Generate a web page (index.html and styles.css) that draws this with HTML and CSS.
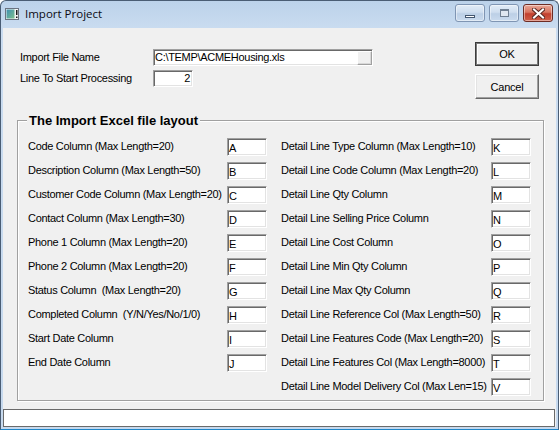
FILE: index.html
```html
<!DOCTYPE html>
<html>
<head>
<meta charset="utf-8">
<title>Import Project</title>
<link rel="stylesheet" href="styles.css">
</head>
<body>
<div class="window">
  <div class="titlebar">
    <svg class="appicon" width="14" height="12" viewBox="0 0 14 12">
      <defs>
        <linearGradient id="ig" x1="0" y1="0" x2="1" y2="1">
          <stop offset="0" stop-color="#3f8fb0"/>
          <stop offset="1" stop-color="#7cc08e"/>
        </linearGradient>
      </defs>
      <rect x="0.5" y="0.5" width="13" height="11" fill="#f4f4f4" stroke="#6b7380"/>
      <rect x="1.5" y="1.5" width="8" height="9" fill="url(#ig)"/>
      <rect x="11" y="2" width="1.5" height="5" fill="#1a1a1a"/>
      <rect x="11" y="8.5" width="1.5" height="1.5" fill="#1a1a1a"/>
    </svg>
    <span class="title">Import Project</span>
    <div class="caption">
      <div class="cbtn"><span class="min-glyph"></span></div>
      <div class="cbtn"><span class="max-glyph"></span></div>
      <div class="cbtn close">
        <svg width="13" height="11" viewBox="0 0 13 11">
          <path d="M2 1.5 L11 9.5 M11 1.5 L2 9.5" stroke="#5a2a24" stroke-width="4" stroke-linecap="square"/>
          <path d="M2 1.5 L11 9.5 M11 1.5 L2 9.5" stroke="#ffffff" stroke-width="2" stroke-linecap="square"/>
        </svg>
      </div>
    </div>
  </div>
  <div class="client">
    <div class="top">
      <div class="form">
        <span class="lbl">Import File Name</span>
        <div class="field file"><span class="val">C:\TEMP\ACMEHousing.xls</span><span class="browse"></span></div>
        <span class="lbl">Line To Start Processing</span>
        <div class="field num"><span class="val">2</span></div>
      </div>
      <div class="buttons">
        <div class="btn default">OK</div>
        <div class="btn">Cancel</div>
      </div>
    </div>
    <div class="group">
      <div class="legend">The Import Excel file layout</div>
      <div class="grid">
        <span class="lbl">Code Column (Max Length=20)</span><div class="cell">A</div>
        <span class="lbl rl">Detail Line Type Column (Max Length=10)</span><div class="cell">K</div>

        <span class="lbl">Description Column (Max Length=50)</span><div class="cell">B</div>
        <span class="lbl rl">Detail Line Code Column (Max Length=20)</span><div class="cell">L</div>

        <span class="lbl">Customer Code Column (Max Length=20)</span><div class="cell">C</div>
        <span class="lbl rl">Detail Line Qty Column</span><div class="cell">M</div>

        <span class="lbl">Contact Column (Max Length=30)</span><div class="cell">D</div>
        <span class="lbl rl">Detail Line Selling Price Column</span><div class="cell">N</div>

        <span class="lbl">Phone 1 Column (Max Length=20)</span><div class="cell">E</div>
        <span class="lbl rl">Detail Line Cost Column</span><div class="cell">O</div>

        <span class="lbl">Phone 2 Column (Max Length=20)</span><div class="cell">F</div>
        <span class="lbl rl">Detail Line Min Qty Column</span><div class="cell">P</div>

        <span class="lbl">Status Column&nbsp; (Max Length=20)</span><div class="cell">G</div>
        <span class="lbl rl">Detail Line Max Qty Column</span><div class="cell">Q</div>

        <span class="lbl">Completed Column&nbsp; (Y/N/Yes/No/1/0)</span><div class="cell">H</div>
        <span class="lbl rl">Detail Line Reference Col (Max Length=50)</span><div class="cell">R</div>

        <span class="lbl">Start Date Column</span><div class="cell">I</div>
        <span class="lbl rl">Detail Line Features Code (Max Length=20)</span><div class="cell">S</div>

        <span class="lbl">End Date Column</span><div class="cell">J</div>
        <span class="lbl rl">Detail Line Features Col (Max Length=8000)</span><div class="cell">T</div>

        <span class="lbl"></span><span></span>
        <span class="lbl rl">Detail Line Model Delivery Col (Max Len=15)</span><div class="cell">V</div>
      </div>
    </div>
    <div class="status"></div>
  </div>
</div>
</body>
</html>
```
FILE: styles.css
```css
html, body {
  margin: 0;
  padding: 0;
  background: #ffffff;
}
body {
  width: 559px;
  height: 430px;
  overflow: hidden;
  font-family: "Liberation Sans", Arial, sans-serif;
  font-size: 11px;
  color: #000;
}
.window {
  width: 559px;
  height: 430px;
  box-sizing: border-box;
  border: 1px solid #4a5d74;
  border-bottom-color: #1f86c8;
  border-radius: 6px 6px 0 0;
  padding: 0 2px 2px 2px;
  background: linear-gradient(#bcd2ea, #cadcf0 28px, #c6d9ee);
  display: flex;
  flex-direction: column;
}
.titlebar {
  height: 27px;
  box-sizing: border-box;
  padding-top: 3px;
  display: flex;
  align-items: flex-start;
}
.appicon {
  margin: 4px 0 0 2px;
  flex: none;
}
.title {
  font-family: "Open Sans", "Noto Sans", sans-serif;
  font-size: 11.5px;
  line-height: 16px;
  margin: 2px 0 0 6px;
  color: #0b0b14;
}
.caption {
  margin-left: auto;
  margin-right: 3px;
  display: flex;
  gap: 4px;
}
.cbtn {
  width: 30px;
  height: 18px;
  box-sizing: border-box;
  border: 1px solid #7f95b3;
  border-radius: 3px;
  background: linear-gradient(#e2ecf7, #cfdeef 45%, #bccfe6 55%, #cadbee);
  box-shadow: inset 0 0 0 1px rgba(255,255,255,0.45);
  display: flex;
  align-items: center;
  justify-content: center;
}
.min-glyph {
  width: 10px;
  height: 3px;
  box-sizing: border-box;
  background: #fff;
  border: 1px solid #43566f;
  margin-top: 7px;
}
.max-glyph {
  width: 9px;
  height: 8px;
  box-sizing: border-box;
  border: 1px solid #6f7f92;
  border-top-width: 2px;
  background: #dfe7f1;
}
.cbtn.close {
  border-color: #6d2c24;
  background: linear-gradient(#e9a797, #d8745f 45%, #c23f2e 55%, #cf5f48);
}
.client {
  flex: 1;
  background: #f0f0f0;
  display: flex;
  flex-direction: column;
}
.top {
  display: flex;
  padding: 14px 17px 0 17px;
}
.form {
  padding-top: 7px;
  display: grid;
  grid-template-columns: 133px auto;
  grid-auto-rows: 17px;
  row-gap: 4px;
  align-self: flex-start;
}
.lbl {
  letter-spacing: -0.3px;
  white-space: nowrap;
  line-height: 17px;
}
.field {
  height: 17px;
  box-sizing: border-box;
  border: 1px solid;
  border-color: #a0a0a0 #ffffff #ffffff #a0a0a0;
  box-shadow: inset 1px 1px 0 #696969, inset -1px -1px 0 #e3e3e3;
  background: #fff;
  display: flex;
  align-items: center;
  letter-spacing: -0.3px;
  line-height: 15px;
}
.field.file {
  width: 220px;
  padding-left: 1px;
}
.field.file .browse {
  margin-left: auto;
  width: 15px;
  height: 14px;
  box-sizing: border-box;
  background: #f0f0f0;
  border: 1px solid;
  border-color: #ffffff #a0a0a0 #a0a0a0 #ffffff;
  box-shadow: inset -1px -1px 0 #d8d8d8;
}
.field.num {
  width: 40px;
  justify-content: flex-end;
  padding-right: 2px;
}
.buttons {
  margin-left: auto;
  display: flex;
  flex-direction: column;
  gap: 8px;
}
.btn {
  width: 64px;
  height: 25px;
  box-sizing: border-box;
  border: 1px solid;
  border-color: #ffffff #696969 #696969 #ffffff;
  box-shadow: inset -1px -1px 0 #a0a0a0, inset 1px 1px 0 #e3e3e3;
  background: #f0f0f0;
  display: flex;
  align-items: center;
  justify-content: center;
  letter-spacing: -0.2px;
}
.btn.default {
  height: 24px;
  border: 1px solid #3c3c3c;
  box-shadow: inset 0 0 0 1px #7a7a7a, inset 2px 2px 0 #ffffff;
}
.group {
  margin: 21px 12px 0 14px;
  height: 281px;
  box-sizing: border-box;
  border: 1px solid #a0a0a0;
  box-shadow: inset 1px 1px 0 #ffffff, 1px 1px 0 #ffffff;
  padding: 0 12px 0 10px;
}
.legend {
  width: fit-content;
  margin: -8px 0 0 -1px;
  padding: 0 2px;
  height: 15px;
  line-height: 15px;
  font-size: 13px;
  font-weight: bold;
  background: #f0f0f0;
  white-space: nowrap;
}
.grid {
  margin-top: 10px;
  display: grid;
  grid-template-columns: 199px 40px 224px 40px;
  grid-auto-rows: 18px;
  row-gap: 6px;
}
.grid .lbl {
  line-height: 17px;
}
.grid .rl {
  padding-left: 14px;
}
.cell {
  width: 40px;
  height: 18px;
  box-sizing: border-box;
  border: 1px solid;
  border-color: #a0a0a0 #ffffff #ffffff #a0a0a0;
  box-shadow: inset 1px 1px 0 #696969, inset -1px -1px 0 #e3e3e3;
  background: #fff;
  padding: 1px 0 0 1px;
  line-height: 16px;
}
.status {
  margin: auto 1px 0 0;
  height: 18px;
  box-sizing: border-box;
  border: 1px solid #6a6a6a;
  background: #fff;
}
```
